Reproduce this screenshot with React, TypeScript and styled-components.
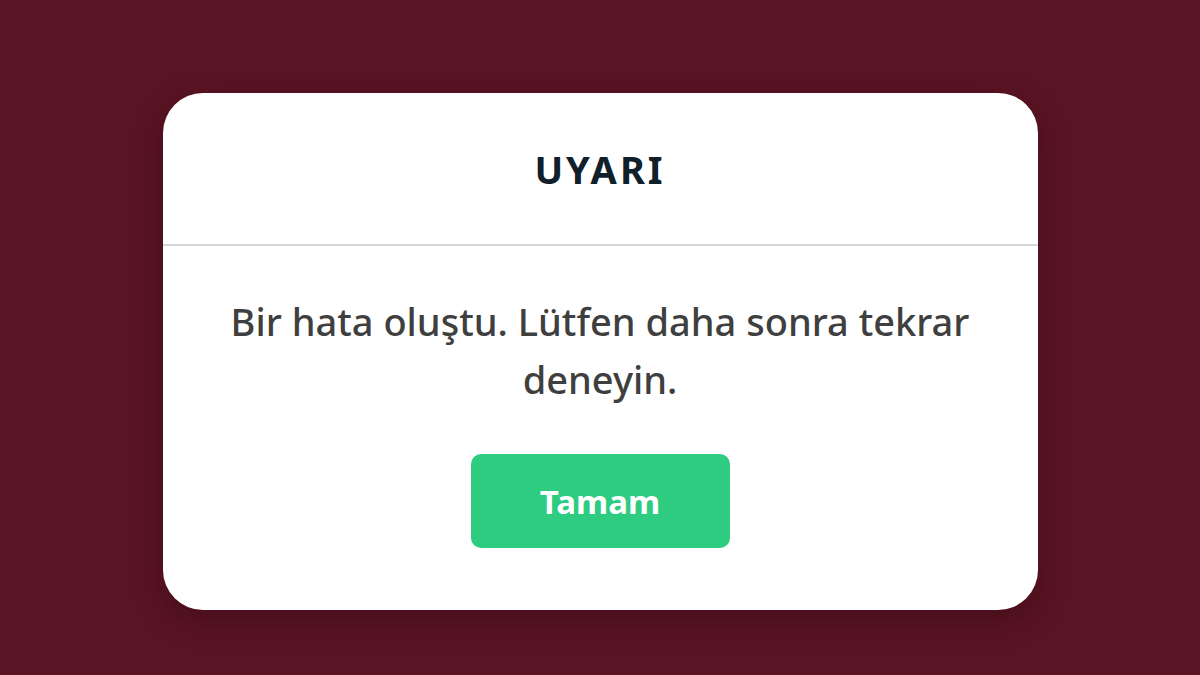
import React from 'react';
import styled, { createGlobalStyle } from 'styled-components';

const GlobalStyle = createGlobalStyle`
  html, body {
    margin: 0;
    padding: 0;
    background: #5b1424;
  }
  #root {
    min-height: 100vh;
  }
`;

const Backdrop = styled.div`
  width: 1200px;
  height: 675px;
  background: #5b1424;
  display: flex;
  justify-content: center;
  padding-top: 93px;
  box-sizing: border-box;
`;

const Dialog = styled.div`
  width: 875px;
  height: 517px;
  background: #ffffff;
  border-radius: 40px;
  box-shadow: 0 10px 30px rgba(30, 0, 8, 0.35);
  display: flex;
  flex-direction: column;
  overflow: hidden;
  font-family: 'Noto Sans', 'Open Sans', sans-serif;
`;

const Header = styled.div`
  height: 153px;
  display: flex;
  align-items: center;
  justify-content: center;
  border-bottom: 2px solid #d6d6d6;
  box-sizing: border-box;
`;

const Title = styled.h2`
  margin: 0;
  font-size: 38px;
  font-weight: 700;
  letter-spacing: 3px;
  color: #10202a;
`;

const Body = styled.div`
  flex: 1;
  display: flex;
  flex-direction: column;
  align-items: center;
  padding: 46px 50px 0;
`;

const Message = styled.p`
  margin: 0;
  font-size: 38px;
  font-weight: 500;
  line-height: 58px;
  color: #3f3f3f;
  text-align: center;
  max-width: 780px;
`;

const Button = styled.button`
  margin-top: 46px;
  width: 259px;
  height: 94px;
  border: none;
  border-radius: 10px;
  background: #2dcc80;
  color: #ffffff;
  font-family: 'Noto Sans', 'Open Sans', sans-serif;
  font-size: 33px;
  font-weight: 700;
  cursor: pointer;
`;

export default function App() {
  return (
    <>
      <GlobalStyle />
      <Backdrop>
        <Dialog>
          <Header>
            <Title>UYARI</Title>
          </Header>
          <Body>
            <Message>Bir hata oluştu. Lütfen daha sonra tekrar deneyin.</Message>
            <Button>Tamam</Button>
          </Body>
        </Dialog>
      </Backdrop>
    </>
  );
}
